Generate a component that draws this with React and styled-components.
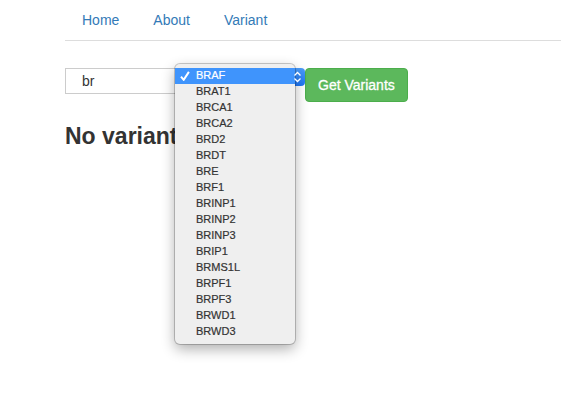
import React, { useState } from "react";
import styled, { createGlobalStyle } from "styled-components";

const genes = [
  "BRAF", "BRAT1", "BRCA1", "BRCA2", "BRD2", "BRDT", "BRE", "BRF1", "BRINP1",
  "BRINP2", "BRINP3", "BRIP1", "BRMS1L", "BRPF1", "BRPF3", "BRWD1", "BRWD3",
];

const GlobalStyle = createGlobalStyle`
  *, *::before, *::after { box-sizing: border-box; }
  body {
    margin: 0;
    background: #fff;
    color: #333;
    font: 14px/20px "Helvetica Neue", Helvetica, "Liberation Sans", Arial, sans-serif;
  }
`;

const Page = styled.div`
  min-height: 100vh;
  padding-left: 65px;
`;

const Nav = styled.nav`
  display: flex;
  border-bottom: 1px solid #ddd;
`;

const NavLink = styled.a`
  padding: 10px 17px;
  color: #337ab7;
  text-decoration: none;
`;

const SearchForm = styled.form`
  display: flex;
  align-items: flex-start;
  margin-top: 27px;
`;

const SearchInput = styled.input`
  width: 112px;
  height: 26px;
  padding: 0 16px;
  border: 1px solid #ccc;
  border-radius: 0;
  outline: none;
  background: #fff;
  color: #333;
  font: inherit;
`;

const Picker = styled.div`
  position: relative;
  display: flex;
  width: 128px;
  height: 18px;
`;

const GeneSelect = styled.select`
  appearance: none;
  width: 100%;
  padding: 0 20px 0 8px;
  border: 0;
  border-radius: 4px;
  background: linear-gradient(#4b9cf8, #1f76f5);
  color: #fff;
  font: inherit;
  font-size: 11px;
`;

const Arrows = styled.svg`
  position: absolute;
  z-index: 1;
  top: 3px;
  right: 3px;
  width: 9px;
  height: 12px;
  pointer-events: none;
`;

const Menu = styled.ul`
  position: absolute;
  top: -4px;
  left: -2px;
  width: 120px;
  margin: 0;
  padding: 4px 0;
  border-radius: 5px;
  background: #efefef;
  box-shadow: 0 0 0 1px rgba(0, 0, 0, 0.2), 0 5px 14px rgba(0, 0, 0, 0.32);
  list-style: none;
  font-size: 11px;
  line-height: 14px;
`;

const Option = styled.li`
  display: grid;
  grid-template-columns: 21px 1fr;
  align-items: center;
  height: 16px;
  padding-bottom: 2px;
  background: ${(p) => (p.$selected ? "#3f94fc" : "transparent")};
  color: ${(p) => (p.$selected ? "#fff" : "#333")};
  -webkit-text-stroke: 0.2px currentColor;
  cursor: default;
`;

const Mark = styled.span`
  display: flex;
  padding: 2px 0 0 5px;
`;

const SubmitButton = styled.button`
  padding: 6px 12px;
  border: 1px solid #4cae4c;
  border-radius: 4px;
  background: #5cb85c;
  color: #fff;
  font: inherit;
  -webkit-text-stroke: 0.3px #fff;
  cursor: pointer;
`;

const Heading = styled.h3`
  margin: 20px 0 10px;
  font-size: 23px;
  line-height: 28px;
  font-weight: 700;
`;

export default function App() {
  const [query, setQuery] = useState("br");
  const [gene, setGene] = useState("BRAF");

  return (
    <>
      <GlobalStyle />
      <Page>
        <Nav>
          <NavLink href="#home">Home</NavLink>
          <NavLink href="#about">About</NavLink>
          <NavLink href="#variant">Variant</NavLink>
        </Nav>
        <SearchForm onSubmit={(e) => e.preventDefault()}>
          <SearchInput
            type="text"
            aria-label="Gene search"
            value={query}
            onChange={(e) => setQuery(e.target.value)}
          />
          <Picker>
            <GeneSelect
              aria-label="Gene"
              value={gene}
              onChange={(e) => setGene(e.target.value)}
            >
              {genes.map((name) => (
                <option key={name}>{name}</option>
              ))}
            </GeneSelect>
            <Menu role="listbox" aria-label="Matching genes">
              {genes.map((name) => (
                <Option
                  key={name}
                  role="option"
                  aria-selected={name === gene}
                  $selected={name === gene}
                  onClick={() => setGene(name)}
                >
                  <Mark>
                    {name === gene && (
                      <svg width="10" height="10" viewBox="0 0 10 10" fill="none" stroke="#fff" strokeWidth="2" aria-hidden="true">
                        <path d="M1 5.6 3.7 8.8 8.9 0.9" />
                      </svg>
                    )}
                  </Mark>
                  {name}
                </Option>
              ))}
            </Menu>
            <Arrows viewBox="0 0 9 12" fill="none" stroke="#fff" strokeWidth="1.3" aria-hidden="true">
              <path d="M1.5 4.5 4.5 1.5 7.5 4.5M1.5 7.5 4.5 10.5 7.5 7.5" />
            </Arrows>
          </Picker>
          <SubmitButton type="submit">Get Variants</SubmitButton>
        </SearchForm>
        <Heading>No variants</Heading>
      </Page>
    </>
  );
}
